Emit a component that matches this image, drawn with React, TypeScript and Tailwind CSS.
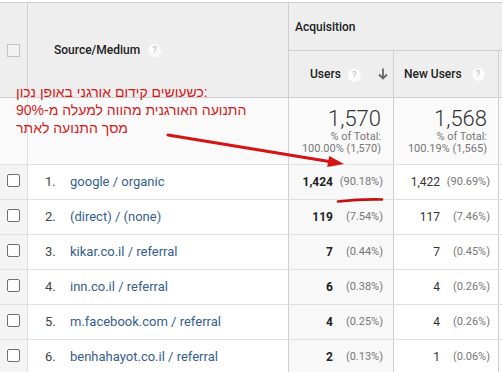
import React from "react";

function Help() {
  return (
    <span className="inline-flex h-[13px] w-[13px] items-center justify-center rounded-full bg-white/80 text-[9px] font-normal leading-none text-[#b5b5b5]">
      ?
    </span>
  );
}

function Check({ header }: { header?: boolean }) {
  return header ? (
    <span className="block h-[13px] w-[13px] border border-[#c4c4c4] bg-[#f2f2f2]" />
  ) : (
    <span className="block h-[13px] w-[13px] rounded-[2px] border border-[#6f6f6f] bg-white" />
  );
}

const rows = [
  { n: "1.", src: "google / organic", u: "1,424", up: "(90.18%)", nu: "1,422", nup: "(90.69%)" },
  { n: "2.", src: "(direct) / (none)", u: "119", up: "(7.54%)", nu: "117", nup: "(7.46%)" },
  { n: "3.", src: "kikar.co.il / referral", u: "7", up: "(0.44%)", nu: "7", nup: "(0.45%)" },
  { n: "4.", src: "inn.co.il / referral", u: "6", up: "(0.38%)", nu: "4", nup: "(0.26%)" },
  { n: "5.", src: "m.facebook.com / referral", u: "4", up: "(0.25%)", nu: "4", nup: "(0.26%)" },
  { n: "6.", src: "benhahayot.co.il / referral", u: "2", up: "(0.13%)", nu: "1", nup: "(0.06%)" },
];

export default function App() {
  return (
    <div className="relative h-[372px] w-[502px] overflow-hidden bg-white font-['Roboto',sans-serif] text-[#222]">
      <div className="mt-[2px] border-t border-[#cfcfcf]">
        {/* header */}
        <div className="flex h-[95px] border-b border-[#cfcfcf] bg-[#eeeeee]">
          <div className="flex w-[28px] shrink-0 items-center justify-center border-r border-[#cfcfcf] pt-[1px]">
            <Check header />
          </div>
          <div className="flex w-[261px] shrink-0 items-center gap-[8px] border-r border-[#cfcfcf] pl-[26px] text-[12px] font-medium">
            <span>Source/Medium</span>
            <Help />
          </div>
          <div className="flex flex-1 flex-col">
            <div className="flex h-[48px] items-center border-b border-[#cfcfcf] pl-[6px] text-[12px] font-medium">
              Acquisition
            </div>
            <div className="flex flex-1">
              <div className="flex w-[105px] shrink-0 items-center border-r border-[#cfcfcf] pl-[21px] pr-[5px] text-[12px] font-medium">
                <span>Users</span>
                <span className="ml-[7px]">
                  <Help />
                </span>
                <svg className="ml-auto" width="10" height="12" viewBox="0 0 10 12" fill="none" stroke="#666" strokeWidth="1.8">
                  <path d="M5 0.5V10.5M1 6.5L5 10.5L9 6.5" />
                </svg>
              </div>
              <div className="flex w-[105px] shrink-0 items-center gap-[10px] border-r border-[#cfcfcf] pl-[10px] text-[12px] font-medium">
                <span>New Users</span>
                <Help />
              </div>
              <div className="flex-1" />
            </div>
          </div>
        </div>

        {/* totals */}
        <div className="flex h-[67px] border-b border-[#e0e0e0] bg-[#fafafa]">
          <div className="w-[28px] shrink-0 border-r border-[#e0e0e0]" />
          <div className="w-[261px] shrink-0 border-r border-[#cfcfcf]" />
          <div className="flex w-[105px] shrink-0 flex-col items-end justify-center border-r border-[#cfcfcf] pr-[12px]">
            <span className="text-[22px] font-light leading-[24px] text-[#333]">1,570</span>
            <span className="text-[11px] leading-[12px] text-[#777]">% of Total:</span>
            <span className="text-[11px] leading-[12px] text-[#777]">100.00% (1,570)</span>
          </div>
          <div className="flex w-[105px] shrink-0 flex-col items-end justify-center border-r border-[#cfcfcf] pr-[11px]">
            <span className="text-[22px] font-light leading-[24px] text-[#333]">1,568</span>
            <span className="text-[11px] leading-[12px] text-[#777]">% of Total:</span>
            <span className="text-[11px] leading-[12px] text-[#777]">100.19% (1,565)</span>
          </div>
          <div className="flex-1" />
        </div>

        {/* rows */}
        {rows.map((r) => (
          <div key={r.n} className="flex h-[35px] border-b border-[#e0e0e0]">
            <div className="flex w-[28px] shrink-0 items-center justify-center border-r border-[#e0e0e0] bg-[#f4f4f4] pb-[3px]">
              <Check />
            </div>
            <div className="flex w-[261px] shrink-0 items-center border-r border-[#cfcfcf] pl-[17px] text-[13px]">
              <span className="w-[25px] text-[#444]">{r.n}</span>
              <span className="text-[#35608c]">{r.src}</span>
            </div>
            <div className="flex w-[105px] shrink-0 items-center justify-end gap-[5px] border-r border-[#cfcfcf] bg-[#f8f8f8] pr-[10px]">
              <span className="text-[12px] font-bold text-[#222]">{r.u}</span>
              <span className="w-[45px] text-right text-[11px] text-[#777]">{r.up}</span>
            </div>
            <div className="flex w-[105px] shrink-0 items-center justify-end gap-[5px] border-r border-[#cfcfcf] pr-[8px]">
              <span className="text-[12px] text-[#333]">{r.nu}</span>
              <span className="w-[45px] text-right text-[11px] text-[#777]">{r.nup}</span>
            </div>
            <div className="flex-1" />
          </div>
        ))}
      </div>

      {/* annotation text */}
      <div className="absolute left-[16px] top-[83px] font-['Liberation_Sans','DejaVu_Sans',sans-serif] text-[14px] leading-[18px] text-[#d21a1a]">
        <div>כשעושים קידום אורגני באופן נכון:</div>
        <div>התנועה האורגנית מהווה למעלה מ-90%</div>
        <div>מסך התנועה לאתר</div>
      </div>

      {/* annotation drawing */}
      <svg className="pointer-events-none absolute left-0 top-0" width="502" height="372" viewBox="0 0 502 372">
        <path d="M168 135L329 161.5" stroke="#d41414" strokeWidth="3" strokeLinecap="round" fill="none" />
        <polygon points="344,164 327.2,167 329.2,156" fill="#d41414" />
        <path d="M338 201.5Q360 199 382 199.5" stroke="#c81010" strokeWidth="2.6" strokeLinecap="round" fill="none" />
      </svg>
    </div>
  );
}
